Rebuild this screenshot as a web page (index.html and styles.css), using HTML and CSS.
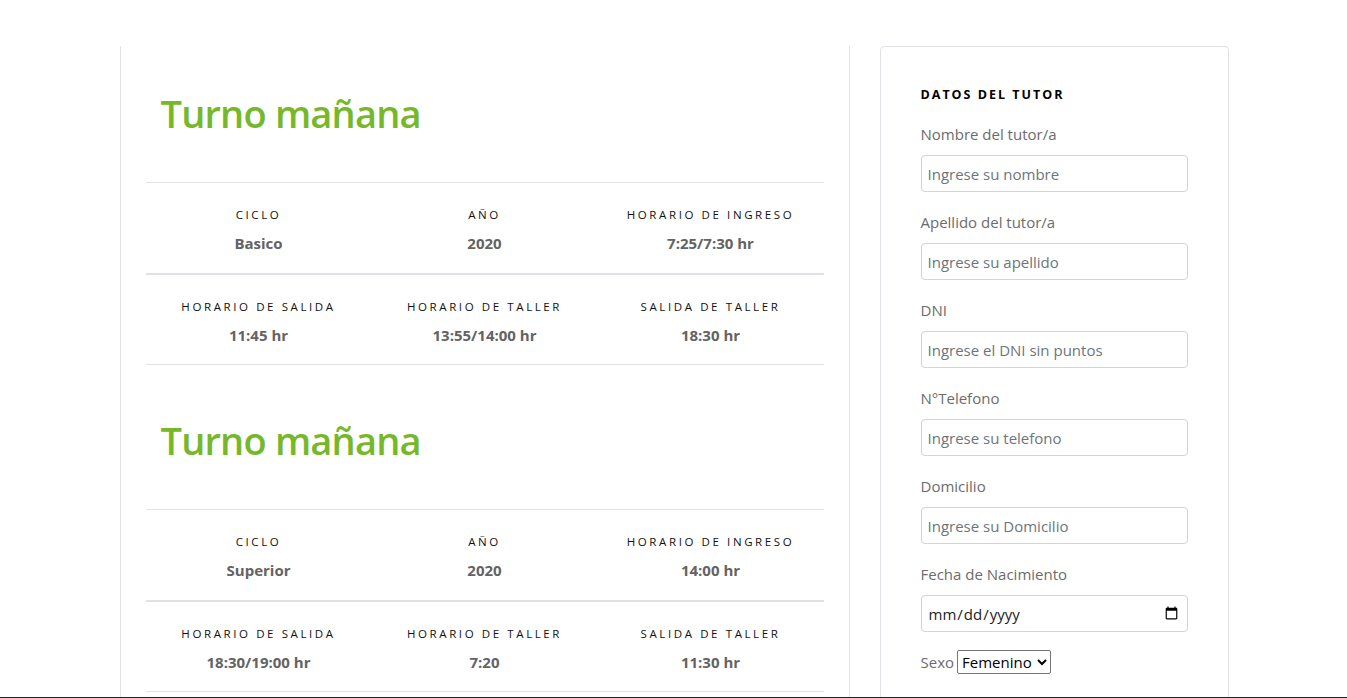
FILE: index.html
```html
<!DOCTYPE html>
<html lang="es">
<head>
<meta charset="utf-8">
<title>Inscripción</title>
<link rel="stylesheet" href="styles.css">
</head>
<body>
<div class="container">
  <main class="schedule">
    <section class="turno">
      <h1 class="turno-title">Turno mañana</h1>
      <div class="info-row first">
        <div class="cell"><span class="label">Ciclo</span><span class="value">Basico</span></div>
        <div class="cell"><span class="label">Año</span><span class="value">2020</span></div>
        <div class="cell"><span class="label">Horario de ingreso</span><span class="value">7:25/7:30 hr</span></div>
      </div>
      <div class="info-row second">
        <div class="cell"><span class="label">Horario de salida</span><span class="value">11:45 hr</span></div>
        <div class="cell"><span class="label">Horario de taller</span><span class="value">13:55/14:00 hr</span></div>
        <div class="cell"><span class="label">Salida de taller</span><span class="value">18:30 hr</span></div>
      </div>
    </section>
    <section class="turno">
      <h1 class="turno-title">Turno mañana</h1>
      <div class="info-row first">
        <div class="cell"><span class="label">Ciclo</span><span class="value">Superior</span></div>
        <div class="cell"><span class="label">Año</span><span class="value">2020</span></div>
        <div class="cell"><span class="label">Horario de ingreso</span><span class="value">14:00 hr</span></div>
      </div>
      <div class="info-row second">
        <div class="cell"><span class="label">Horario de salida</span><span class="value">18:30/19:00 hr</span></div>
        <div class="cell"><span class="label">Horario de taller</span><span class="value">7:20</span></div>
        <div class="cell"><span class="label">Salida de taller</span><span class="value">11:30 hr</span></div>
      </div>
    </section>
  </main>
  <aside class="card">
    <h2 class="card-title">Datos del tutor</h2>
    <form class="form">
      <div class="group">
        <label for="nombre">Nombre del tutor/a</label>
        <input id="nombre" class="control" type="text" placeholder="Ingrese su nombre">
      </div>
      <div class="group">
        <label for="apellido">Apellido del tutor/a</label>
        <input id="apellido" class="control" type="text" placeholder="Ingrese su apellido">
      </div>
      <div class="group">
        <label for="dni">DNI</label>
        <input id="dni" class="control" type="text" placeholder="Ingrese el DNI sin puntos">
      </div>
      <div class="group">
        <label for="tel">N°Telefono</label>
        <input id="tel" class="control" type="text" placeholder="Ingrese su telefono">
      </div>
      <div class="group">
        <label for="dom">Domicilio</label>
        <input id="dom" class="control" type="text" placeholder="Ingrese su Domicilio">
      </div>
      <div class="group">
        <label for="fecha">Fecha de Nacimiento</label>
        <input id="fecha" class="control date" type="date">
      </div>
      <div class="group inline">
        <label for="sexo">Sexo</label>
        <select id="sexo" class="select">
          <option>Femenino</option>
          <option>Masculino</option>
        </select>
      </div>
    </form>
  </aside>
</div>
<div class="bottom-edge"></div>
</body>
</html>
```
FILE: styles.css
```css
* { box-sizing: border-box; }

html, body {
  margin: 0;
  padding: 0;
  background: #fff;
  font-family: "Open Sans", "Noto Sans", sans-serif;
  color: #212529;
}

body { padding-left: 1px; }

.container {
  width: 1109px;
  margin: 46px auto 0;
  display: flex;
  gap: 30px;
  align-items: flex-start;
}

.schedule {
  width: 730px;
  border-left: 1px solid #e3e3e3;
  border-right: 1px solid #e3e3e3;
  padding: 42px 25px 40px;
  min-height: 700px;
}

.turno + .turno { margin-top: 50px; }

.turno-title {
  margin: 0 0 44px 15px;
  font-size: 38px;
  line-height: 50px;
  font-weight: 600;
  color: #76b82a;
  letter-spacing: -0.8px;
}

.info-row {
  display: grid;
  grid-template-columns: repeat(3, 1fr);
  text-align: center;
}

.info-row.first {
  border-top: 1px solid #e3e3e3;
  border-bottom: 2px solid #dee2e6;
  padding: 23px 0 18px;
}

.info-row.second {
  border-bottom: 1px solid #e3e3e3;
  padding: 23px 0 17px;
}

.cell {
  display: flex;
  flex-direction: column;
  align-items: center;
  gap: 7px;
}

.label {
  font-size: 11.5px;
  line-height: 18px;
  letter-spacing: 2.6px;
  text-transform: uppercase;
  color: #111;
}

.value {
  font-size: 15px;
  line-height: 24px;
  font-weight: 700;
  color: #636363;
}

.card {
  width: 349px;
  border: 1px solid #dee2e6;
  border-radius: 4px;
  padding: 40px 40px 60px;
  min-height: 700px;
}

.card-title {
  margin: 0 0 19px;
  font-size: 12.5px;
  line-height: 16px;
  font-weight: 700;
  letter-spacing: 2px;
  text-transform: uppercase;
  color: #000;
}

.group { margin-bottom: 18px; }

.group label {
  display: block;
  font-size: 15px;
  line-height: 24px;
  color: #6c6c6c;
  margin-bottom: 9px;
}

.control {
  display: block;
  width: 100%;
  height: 37px;
  padding: 6px 6px;
  font-family: inherit;
  font-size: 15px;
  color: #495057;
  border: 1px solid #ced4da;
  border-radius: 4px;
  background: #fff;
  outline: none;
}

.control::placeholder { color: #6c757d; }

.control.date { color: #222; }

.group.inline {
  display: flex;
  align-items: center;
  gap: 3px;
}

.group.inline label {
  display: inline;
  margin: 0;
}

.select {
  font-family: inherit;
  font-size: 15px;
  height: 24px;
  color: #000;
  border: 1px solid #767676;
  border-radius: 2px;
  background: #fff;
}

.bottom-edge {
  position: fixed;
  left: 0;
  right: 0;
  bottom: 0;
  height: 1px;
  background: #222;
}
```
